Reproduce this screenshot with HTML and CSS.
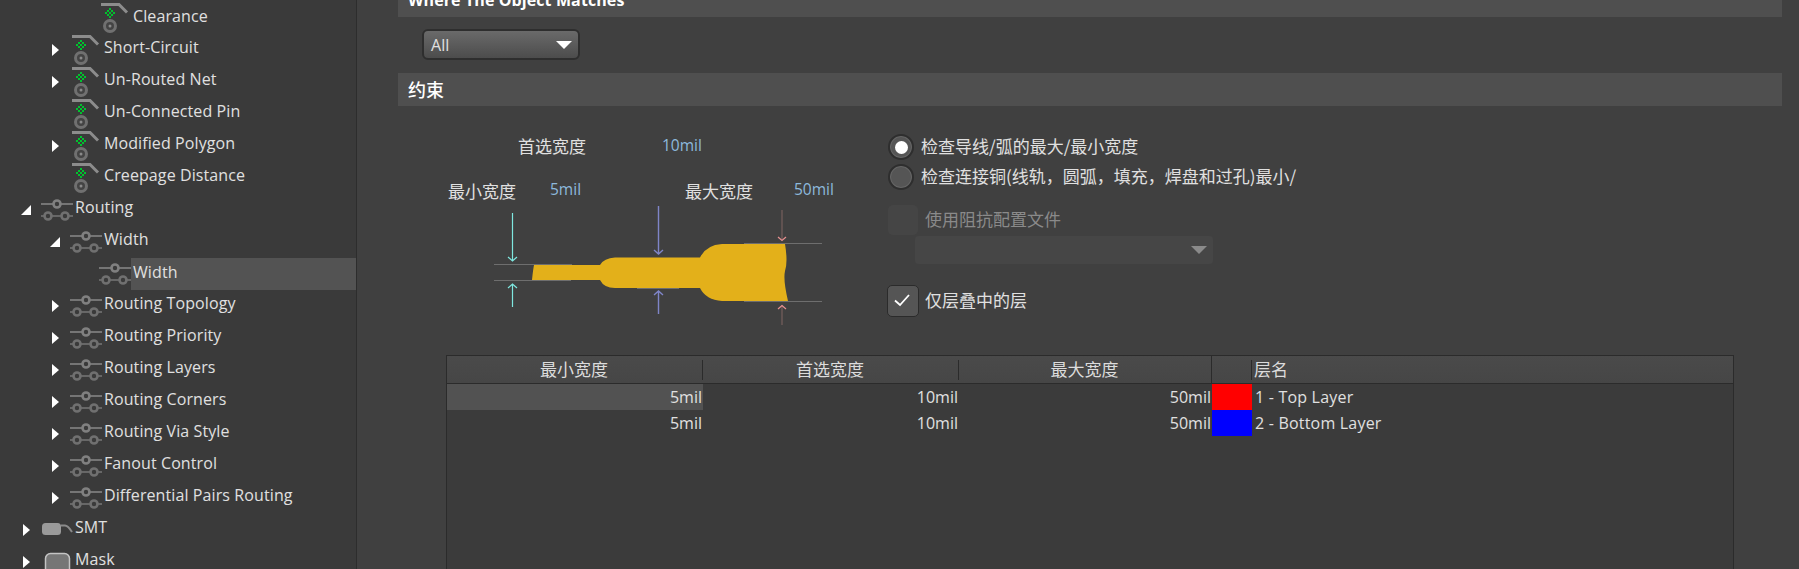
FILE: index.html
```html
<!DOCTYPE html>
<html lang="en">
<head>
    <meta charset="UTF-8">
    <title>PCB Rules and Constraints</title>
    <link rel="stylesheet" href="styles.css">
</head>
<body>
    <svg class="defs" width="0" height="0">
        <symbol id="ico-rule" viewBox="0 0 32 32">
            <path d="M2 2.5H20L28 10.5" fill="none" stroke="#8c8c8c" stroke-width="3"/>
            <g fill="#00c32e">
                <rect x="10" y="6" width="2" height="2"/>
                <rect x="8" y="8" width="2" height="2"/><rect x="12" y="8" width="2" height="2"/>
                <rect x="6" y="10" width="2" height="2"/><rect x="10" y="10" width="2" height="2"/><rect x="14" y="10" width="2" height="2"/>
                <rect x="8" y="12" width="2" height="2"/><rect x="12" y="12" width="2" height="2"/>
                <rect x="10" y="14" width="2" height="2"/>
            </g>
            <circle cx="11" cy="24" r="5.5" fill="#444" stroke="#707070" stroke-width="3"/>
            <circle cx="11" cy="24" r="1.5" fill="#8a8a8a"/>
        </symbol>
        <symbol id="ico-route" viewBox="0 0 32 32">
            <path d="M0 10H32" stroke="#8a8a8a" stroke-width="1.5"/>
            <path d="M0 22H32" stroke="#777" stroke-width="1.5"/>
            <circle cx="16" cy="10" r="3.5" fill="#3a3a3a" stroke="#808080" stroke-width="2.6"/>
            <circle cx="7" cy="22" r="3.5" fill="#3a3a3a" stroke="#707070" stroke-width="2.6"/>
            <circle cx="24" cy="22" r="3.5" fill="#3a3a3a" stroke="#707070" stroke-width="2.6"/>
        </symbol>
        <symbol id="ico-smt" viewBox="0 0 32 32">
            <rect x="1" y="9" width="19" height="12" rx="3.5" fill="#9a9a9a"/>
            <path d="M20 11.5H24Q27 11.500 31 18" fill="none" stroke="#8a8a8a" stroke-width="2"/>
        </symbol>
        <symbol id="ico-mask" viewBox="0 0 32 32">
            <rect x="4.500" y="7.500" width="24" height="24" rx="5" fill="#767676" stroke="#c4c4c4" stroke-width="1.500"/>
        </symbol>
    </svg>

    <aside class="tree">
        <div class="row lvl3"><span class="arrow"></span><svg class="ico"><use href="#ico-rule"/></svg><span class="label">Clearance</span></div>
        <div class="row lvl2"><span class="arrow closed"></span><svg class="ico"><use href="#ico-rule"/></svg><span class="label">Short-Circuit</span></div>
        <div class="row lvl2"><span class="arrow closed"></span><svg class="ico"><use href="#ico-rule"/></svg><span class="label">Un-Routed Net</span></div>
        <div class="row lvl2"><span class="arrow"></span><svg class="ico"><use href="#ico-rule"/></svg><span class="label">Un-Connected Pin</span></div>
        <div class="row lvl2"><span class="arrow closed"></span><svg class="ico"><use href="#ico-rule"/></svg><span class="label">Modified Polygon</span></div>
        <div class="row lvl2"><span class="arrow"></span><svg class="ico"><use href="#ico-rule"/></svg><span class="label">Creepage Distance</span></div>
        <div class="row lvl1"><span class="arrow open"></span><svg class="ico"><use href="#ico-route"/></svg><span class="label">Routing</span></div>
        <div class="row lvl2"><span class="arrow open"></span><svg class="ico"><use href="#ico-route"/></svg><span class="label">Width</span></div>
        <div class="row lvl3"><span class="arrow"></span><svg class="ico"><use href="#ico-route"/></svg><span class="label selected">Width</span></div>
        <div class="row lvl2"><span class="arrow closed"></span><svg class="ico"><use href="#ico-route"/></svg><span class="label">Routing Topology</span></div>
        <div class="row lvl2"><span class="arrow closed"></span><svg class="ico"><use href="#ico-route"/></svg><span class="label">Routing Priority</span></div>
        <div class="row lvl2"><span class="arrow closed"></span><svg class="ico"><use href="#ico-route"/></svg><span class="label">Routing Layers</span></div>
        <div class="row lvl2"><span class="arrow closed"></span><svg class="ico"><use href="#ico-route"/></svg><span class="label">Routing Corners</span></div>
        <div class="row lvl2"><span class="arrow closed"></span><svg class="ico"><use href="#ico-route"/></svg><span class="label">Routing Via Style</span></div>
        <div class="row lvl2"><span class="arrow closed"></span><svg class="ico"><use href="#ico-route"/></svg><span class="label">Fanout Control</span></div>
        <div class="row lvl2"><span class="arrow closed"></span><svg class="ico"><use href="#ico-route"/></svg><span class="label">Differential Pairs Routing</span></div>
        <div class="row lvl1"><span class="arrow closed"></span><svg class="ico"><use href="#ico-smt"/></svg><span class="label">SMT</span></div>
        <div class="row lvl1"><span class="arrow closed"></span><svg class="ico"><use href="#ico-mask"/></svg><span class="label">Mask</span></div>
    </aside>

    <main class="panel">
        <div class="section-head first">Where The Object Matches</div>
        <div class="select-row">
            <div class="select"><span>All</span><span class="caret"></span></div>
        </div>
        <div class="section-head cjk">约束</div>

        <div class="rule-body">
            <div class="diagram">
                <svg class="drawing" width="489" height="249" viewBox="398 106 489 249">
                    <path class="trace" d="M534 265L600 265Q604 258 615 257.500L700 257.500Q706 245 722 244L785 244Q788 262 785 271Q783 280 788 301L722 301Q706 300 700 288L615 288Q604 288 600 280L532 280Q533 270 534 265Z"/>
                    <path class="edge" d="M494 264.500H572M494 280.500H571M744 243.500H822M744 301.500H822M637 288.500H679"/>
                    <path class="min" d="M512.500 213V261M508 257L512.500 261L517 257M512.500 307V284M508 288L512.500 284L517 288"/>
                    <path class="pref" d="M658.500 206V254M654 250L658.500 254L663 250M658.500 314V291M654 295L658.500 291L663 295"/>
                    <path class="max-line" d="M782 210V240M782 325V305"/>
                    <path class="max-head" d="M778 237L782 240.500L786 237M778 309L782 305.500L786 309"/>
                </svg>
                <span class="tag cjk tag-pref">首选宽度</span>
                <span class="val val-pref">10mil</span>
                <span class="tag cjk tag-min">最小宽度</span>
                <span class="val val-min">5mil</span>
                <span class="tag cjk tag-max">最大宽度</span>
                <span class="val val-max">50mil</span>
            </div>

            <div class="options cjk">
                <div class="option"><span class="radio on"></span><span class="txt">检查导线/弧的最大/最小宽度</span></div>
                <div class="option"><span class="radio"></span><span class="txt">检查连接铜(线轨，圆弧，填充，焊盘和过孔)最小/</span></div>
                <div class="option check-row disabled"><span class="check"></span><span class="txt">使用阻抗配置文件</span></div>
                <div class="select-off"><span class="caret"></span></div>
                <div class="option check-row only-stack">
                    <span class="check on">
                        <svg width="29" height="29" viewBox="0 0 29 29"><path d="M7 14.500L12 19L21 9" fill="none" stroke="#fff" stroke-width="1.800"/></svg>
                    </span><span class="txt">仅层叠中的层</span>
                </div>
            </div>
        </div>

        <div class="table-wrap">
            <table class="layers">
                <colgroup>
                    <col class="c-w"><col class="c-w"><col class="c-max"><col class="c-sw"><col>
                </colgroup>
                <thead>
                    <tr>
                        <th class="cjk">最小宽度</th>
                        <th class="cjk">首选宽度</th>
                        <th class="cjk full">最大宽度</th>
                        <th></th>
                        <th class="cjk name">层名</th>
                    </tr>
                </thead>
                <tbody>
                    <tr>
                        <td class="num cell-on">5mil</td><td class="num">10mil</td><td class="num">50mil</td>
                        <td class="sw-red"></td><td class="name">1 - Top Layer</td>
                    </tr>
                    <tr>
                        <td class="num">5mil</td><td class="num">10mil</td><td class="num">50mil</td>
                        <td class="sw-blue"></td><td class="name">2 - Bottom Layer</td>
                    </tr>
                </tbody>
            </table>
        </div>
    </main>
</body>
</html>
```

FILE: styles.css
```css
html, body {
    margin: 0;
    height: 569px;
    overflow: hidden;
}
body {
    display: flex;
    background-color: #404040;
    color: #e0e0e0;
    font-family: "Open Sans", "Noto Sans CJK SC", sans-serif;
    font-size: 16px;
    letter-spacing: 0.1px;
}
.defs {
    position: absolute;
}
.cjk {
    font-family: "Noto Sans CJK SC", "Open Sans", sans-serif;
    font-size: 17px;
    letter-spacing: 0;
}

/* rule tree */
.tree {
    width: 356px;
    flex: none;
    padding-top: 2px;
    background-color: #3a3a3a;
    border-right: 1px solid #2d2d2d;
    overflow: hidden;
}
.row {
    display: flex;
    height: 32px;
}
.lvl1 { padding-left: 21px; }
.lvl2 { padding-left: 50px; }
.lvl3 { padding-left: 79px; }
.arrow {
    width: 20px;
    flex: none;
    position: relative;
}
.arrow.closed::before {
    content: "";
    position: absolute;
    left: 2px;
    top: 10px;
    border-left: 7px solid #fff;
    border-top: 6.500px solid transparent;
    border-bottom: 6.500px solid transparent;
}
.arrow.open::before {
    content: "";
    position: absolute;
    left: 0;
    top: 11px;
    border-right: 10px solid #fff;
    border-top: 10px solid transparent;
}
.ico {
    width: 32px;
    height: 32px;
    flex: none;
}
.label {
    flex: 1;
    padding: 0 0 6px 2px;
    line-height: 26px;
    white-space: nowrap;
}
.lvl3 .label {
    padding-bottom: 4px;
    line-height: 28px;
}
.label.selected {
    background-color: #535353;
}

/* right panel */
.panel {
    flex: 1;
    min-width: 0;
    display: flex;
    flex-direction: column;
    padding: 0 17px 0 41px;
    overflow: hidden;
}
.section-head {
    height: 33px;
    flex: none;
    line-height: 33px;
    padding-left: 10px;
    background-color: #4f4f4f;
    color: #fff;
    font-weight: bold;
    white-space: nowrap;
}
.section-head.cjk {
    font-size: 18px;
    font-weight: 500;
}
.section-head.first {
    margin-top: -16px;
}
.select-row {
    height: 31px;
    flex: none;
    margin: 12px 0 13px 24px;
}
.select {
    width: 158px;
    height: 31px;
    box-sizing: border-box;
    display: flex;
    align-items: center;
    justify-content: space-between;
    padding: 0 6px 0 7px;
    border: 2px solid #2e2e2e;
    border-radius: 6px;
    background: linear-gradient(#6a6a6a, #4c4c4c);
}
.caret {
    border-top: 8px solid #fff;
    border-left: 8px solid transparent;
    border-right: 8px solid transparent;
}

.rule-body {
    display: flex;
    height: 249px;
    flex: none;
}
.diagram {
    width: 489px;
    flex: none;
    position: relative;
}
.drawing {
    display: block;
}
.trace { fill: #e3b01a; }
.edge { fill: none; stroke: #6e6e6e; stroke-width: 1.200; }
.min { fill: none; stroke: #7fe8e0; stroke-width: 1.200; }
.pref { fill: none; stroke: #7f85c8; stroke-width: 1.400; }
.max-line { fill: none; stroke: #6e5a58; stroke-width: 1.400; }
.max-head { fill: none; stroke: #e89090; stroke-width: 1.200; }
.tag, .val {
    position: absolute;
    line-height: 24px;
    white-space: nowrap;
}
.val {
    color: #8db9dc;
    font-size: 15.500px;
    letter-spacing: 0;
}
.tag-pref { left: 120px; top: 28px; }
.val-pref { left: 264px; top: 27px; }
.tag-min { left: 50px; top: 73px; }
.val-min { left: 152px; top: 71px; }
.tag-max { left: 287px; top: 73px; }
.val-max { left: 396px; top: 71px; }

.options {
    padding-top: 26px;
    white-space: nowrap;
}
.option {
    display: flex;
    align-items: center;
    height: 30px;
}
.txt {
    margin-bottom: 3px;
}
.radio {
    width: 26px;
    height: 26px;
    box-sizing: border-box;
    margin: 0 7px 0 1px;
    flex: none;
    display: flex;
    align-items: center;
    justify-content: center;
    border: 2px solid #2e2e2e;
    border-radius: 50%;
    background-color: #555;
    box-shadow: inset 0 0 0 1px #666;
}
.radio.on::before {
    content: "";
    width: 13px;
    height: 13px;
    border-radius: 50%;
    background-color: #fff;
}
.check-row {
    margin-top: 13px;
}
.check {
    width: 30px;
    height: 30px;
    margin: 0 7px 0 1px;
    flex: none;
    border-radius: 5px;
    background-color: #454545;
}
.check.on {
    width: 32px;
    height: 32px;
    margin: 0 6px 0 0;
    box-sizing: border-box;
    background-color: #555;
    border: 1.500px solid #2b2b2b;
}
.disabled {
    color: #8a8a8a;
}
.select-off {
    width: 298px;
    height: 28px;
    margin: 1px 0 0 28px;
    box-sizing: border-box;
    display: flex;
    align-items: center;
    justify-content: flex-end;
    padding-right: 6px;
    border-radius: 4px;
    background-color: #464646;
}
.select-off .caret {
    border-top-color: #8a8a8a;
}
.only-stack {
    height: 32px;
    margin-top: 21px;
}

/* layer table */
.table-wrap {
    flex: 1;
    margin: 0 48px;
    background-color: #3b3b3b;
    border: 1px solid #2b2b2b;
    border-bottom: none;
}
.layers {
    width: 100%;
    table-layout: fixed;
    border-collapse: collapse;
}
.c-w { width: 256px; }
.c-max { width: 253px; }
.c-sw { width: 40px; }
.layers th {
    position: relative;
    height: 27px;
    padding: 0 2px 2px 0;
    box-sizing: border-box;
    background: linear-gradient(#4a4a4a, #464646);
    border-bottom: 1px solid #2b2b2b;
    color: #dcdcdc;
    font-weight: normal;
}
.layers th::after {
    content: "";
    position: absolute;
    right: 0;
    top: 4px;
    bottom: 3px;
    width: 1px;
    background-color: #2b2b2b;
}
.layers th:last-child::after {
    display: none;
}
.layers th.full::after {
    top: 0;
    bottom: 0;
}
.layers td {
    height: 26px;
    padding: 0;
    line-height: 24px;
}
.layers .num {
    text-align: right;
    padding-right: 1px;
    letter-spacing: 0;
    box-sizing: border-box;
}
.layers .name {
    text-align: left;
    padding-left: 2px;
}
.layers td.name {
    padding-left: 3px;
    letter-spacing: 0.2px;
    box-sizing: border-box;
    white-space: nowrap;
}
.cell-on { background-color: #525252; }
.sw-red { background-color: #ff0000; }
.sw-blue { background-color: #0000ff; }
```
